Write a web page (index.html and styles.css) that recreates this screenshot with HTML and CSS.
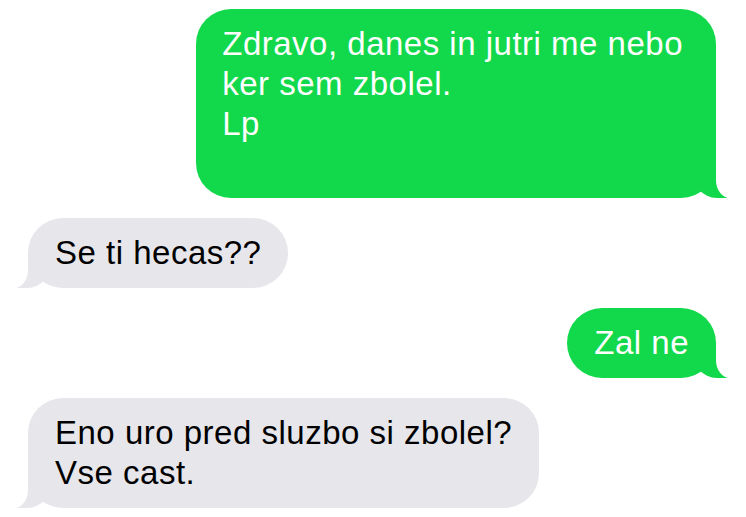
FILE: index.html
```html
<!DOCTYPE html>
<html lang="sl">
<head>
    <meta charset="UTF-8">
    <meta name="viewport" content="width=device-width, initial-scale=1.0">
    <title>Sporočila</title>
    <link rel="stylesheet" href="styles.css">
</head>
<body>
    <div class="thread">
        <div class="msg sent first">Zdravo, danes in jutri me nebo<br>ker sem zbolel.<br>Lp</div>
        <div class="msg received">Se ti hecas??</div>
        <div class="msg sent">Zal ne</div>
        <div class="msg received">Eno uro pred sluzbo si zbolel?<br>Vse cast.</div>
    </div>
</body>
</html>
```

FILE: styles.css
```css
body{
    margin: 0;
    background-color: #fff;
    font-family: "Liberation Sans", Arial, sans-serif;
}
.thread{
    display: flex;
    flex-direction: column;
    gap: 20px;
    padding: 9px 30px 0 28px;
}
.msg{
    position: relative;
    padding: 15px 27px;
    font-size: 33px;
    letter-spacing: 0.5px;
    line-height: 40px;
    border-radius: 35px;
}
.sent{
    align-self: flex-end;
    background-color: #12d84b;
    color: #fff;
}
.first{
    padding: 15px 33px 54px 26px;
}
.received{
    align-self: flex-start;
    background-color: #e6e6eb;
    color: #000;
}

/* tails */
.msg::before,
.msg::after{
    content: "";
    position: absolute;
    bottom: 0;
    height: 34px;
}
.sent::before{
    right: -11px;
    width: 36px;
    background-color: #12d84b;
    border-bottom-left-radius: 26px 30px;
}
.sent::after{
    right: -16px;
    width: 16px;
    background-color: #fff;
    border-bottom-left-radius: 14px 18px;
}
.received::before{
    left: -11px;
    width: 36px;
    background-color: #e6e6eb;
    border-bottom-right-radius: 26px 30px;
}
.received::after{
    left: -16px;
    width: 16px;
    background-color: #fff;
    border-bottom-right-radius: 14px 18px;
}
```
